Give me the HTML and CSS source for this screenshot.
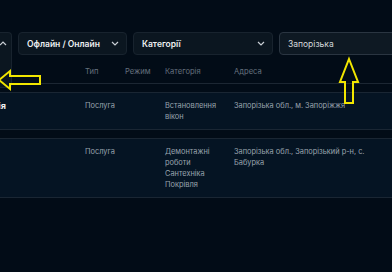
FILE: index.html
```html
<!DOCTYPE html>
<html lang="uk">
<head>
<meta charset="utf-8">
<title>Виконавці</title>
<link rel="stylesheet" href="styles.css">
</head>
<body>
<div class="page">
  <div class="filters">
    <div class="filter open">
      <span class="filter-label">Усі виконавці</span>
      <svg class="chev" width="8" height="5" viewBox="0 0 8 5"><path d="M1 4 L4 1 L7 4" fill="none" stroke="#c9cfd5" stroke-width="1.2"/></svg>
      <div class="menu"></div>
    </div>
    <div class="filter w-mode">
      <span class="filter-label">Офлайн / Онлайн</span>
      <svg class="chev" width="8" height="5" viewBox="0 0 8 5"><path d="M1 1 L4 4 L7 1" fill="none" stroke="#c9cfd5" stroke-width="1.2"/></svg>
    </div>
    <div class="filter w-cat">
      <span class="filter-label">Категорії</span>
      <svg class="chev" width="8" height="5" viewBox="0 0 8 5"><path d="M1 1 L4 4 L7 1" fill="none" stroke="#c9cfd5" stroke-width="1.2"/></svg>
    </div>
    <div class="filter w-region focused">
      <span class="filter-label plain">Запорізька</span>
    </div>
  </div>

  <div class="table">
    <div class="thead">
      <span>Назва</span>
      <span>Тип</span>
      <span>Режим</span>
      <span>Категорія</span>
      <span>Адреса</span>
    </div>
    <div class="row">
      <span class="name">Компанія</span>
      <span>Послуга</span>
      <span></span>
      <span class="cats"><span>Встановлення вікон</span></span>
      <span>Запорізька обл., м. Запоріжжя</span>
    </div>
    <div class="row">
      <span class="name">ФОП</span>
      <span>Послуга</span>
      <span></span>
      <span class="cats"><span>Демонтажні роботи</span><span>Сантехніка</span><span>Покрівля</span></span>
      <span>Запорізька обл., Запорізький р-н, с. Бабурка</span>
    </div>
  </div>

  <svg class="marks" width="392" height="272" viewBox="0 0 392 272">
    <polygon points="-1,80 10,71 10,76 40,76 40,84 10,84 10,89" fill="none" stroke="#f2e600" stroke-width="2" stroke-linejoin="miter"/>
    <polygon points="349,59 358,82 353,82 353,103 345,103 345,82 340,82" fill="none" stroke="#f2e600" stroke-width="2" stroke-linejoin="miter"/>
  </svg>
</div>
</body>
</html>
```
FILE: styles.css
```css
* { box-sizing: border-box; }
html, body {
  margin: 0;
  padding: 0;
  background: #020c17;
  overflow: hidden;
}
body {
  font-family: Inter, "Noto Sans", sans-serif;
  width: 392px;
  height: 272px;
}
.page {
  position: relative;
  width: 392px;
  height: 272px;
  padding-top: 32px;
}
.filters {
  display: flex;
  gap: 6px;
  margin-left: -100px;
  height: 23px;
}
.filter {
  position: relative;
  flex: none;
  display: flex;
  align-items: center;
  justify-content: space-between;
  height: 23px;
  padding: 0 7px 0 8px;
  background: #0b1620;
  border: 1px solid #18232e;
  border-radius: 4px;
  color: #eef0f2;
  font-size: 8.5px;
  font-weight: 600;
  white-space: nowrap;
}
.filter.open {
  width: 112px;
  padding-right: 4px;
  border-radius: 4px 4px 0 0;
  border-bottom-color: #0b1620;
}
.menu {
  position: absolute;
  left: -1px;
  right: -1px;
  top: 21px;
  height: 34px;
  background: #0b1620;
  border: 1px solid #18232e;
  border-top: none;
  border-radius: 0 0 4px 4px;
}
.w-mode { width: 109px; }
.w-cat { width: 140px; }
.w-region { width: 140px; }
.filter.focused {
  background: #0e1923;
  border-color: #2a3541;
}
.filter-label.plain {
  font-weight: 400;
  color: #d6dade;
}
.chev { display: block; }

.table {
  margin-left: -37px;
  width: 429px;
}
.thead, .row {
  display: grid;
  grid-template-columns: 122px 40px 40px 69px 150px;
  font-size: 7.4px;
  line-height: 11px;
}
.thead {
  padding: 11px 0 6px;
  border-bottom: 1px solid #1c2733;
  color: #65717e;
  font-size: 7.6px;
}
.thead span:first-child { visibility: hidden; }
.row {
  margin-top: 8px;
  padding: 7px 0;
  background: #051423;
  border-top: 1px solid #1a2633;
  border-bottom: 1px solid #1a2633;
  color: #9aa4ae;
}
.row .name {
  color: #eef0f2;
  font-weight: 700;
  font-size: 9px;
}
.cats {
  display: flex;
  flex-direction: column;
  padding-right: 10px;
}
.row > span:last-child {
  padding-right: 12px;
}
.marks {
  position: absolute;
  left: 0;
  top: 0;
  pointer-events: none;
}
```
